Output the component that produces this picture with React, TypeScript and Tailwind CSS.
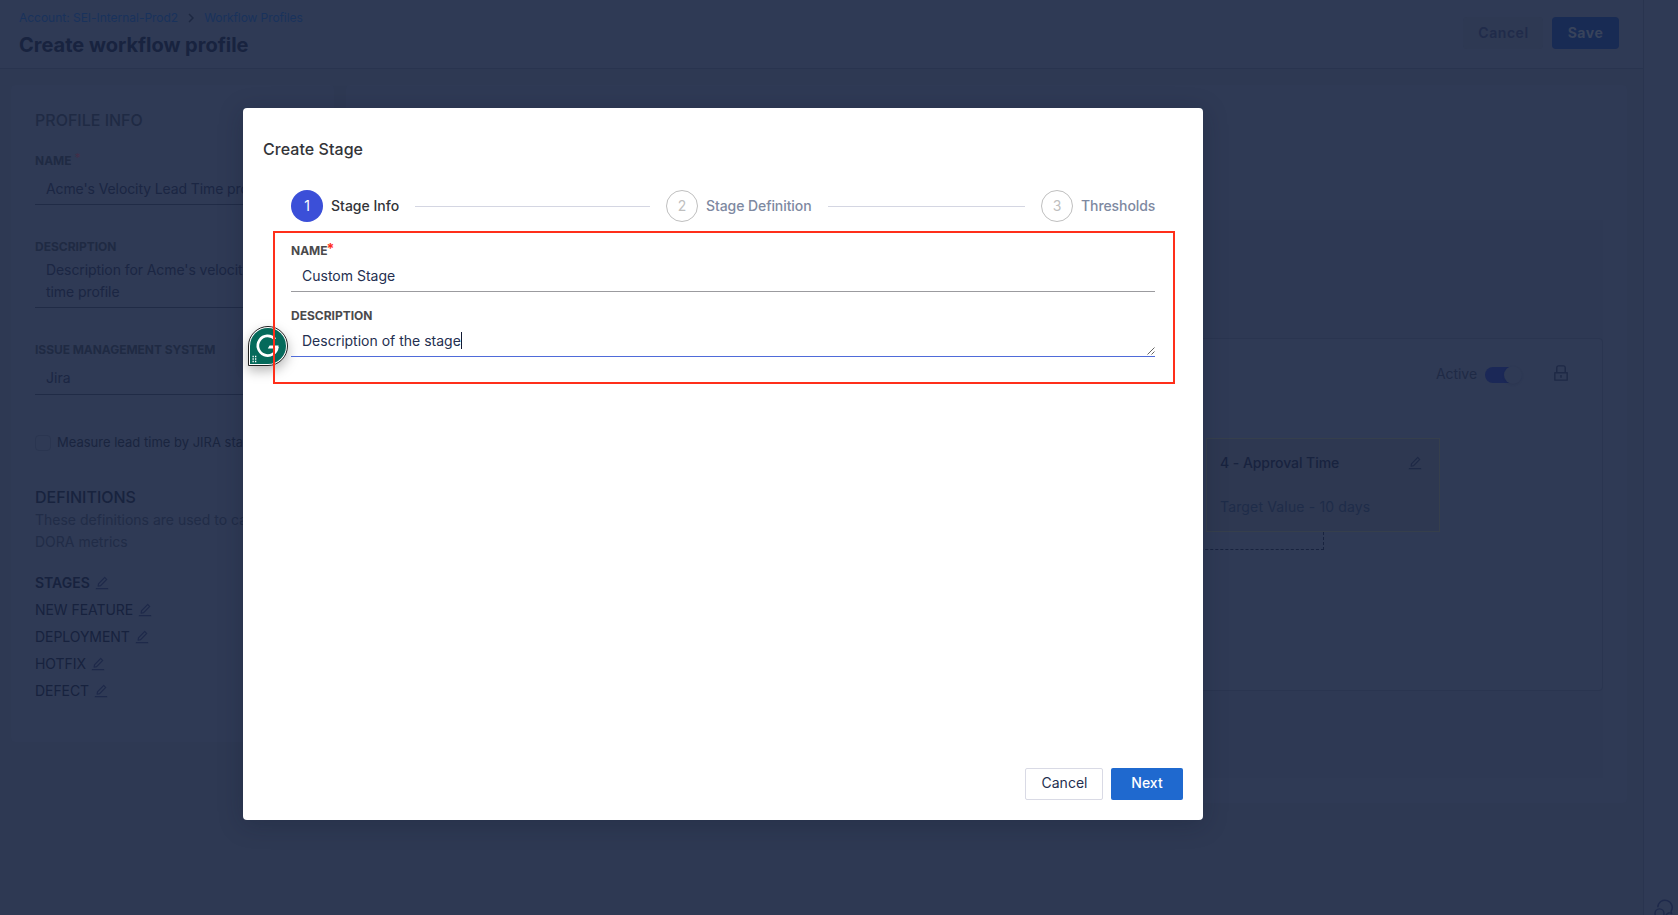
import React from "react";
import { AiOutlineEdit, AiOutlineLock } from "react-icons/ai";

const definitions = ["STAGES", "NEW FEATURE", "DEPLOYMENT", "HOTFIX", "DEFECT"];

function Header() {
  return (
    <header className="flex h-[69px] items-start justify-between border-b border-[#29344f] bg-[#2f3a55] pl-[19px] pr-6">
      <div className="pt-[9px]">
        <nav className="flex h-[18px] items-center text-xs leading-[18px] text-[#19325c]">
          <span className="tracking-[-0.02px]">Account: SEI-Internal-Prod2</span>
          <svg width="6" height="10" viewBox="0 0 6 10" className="mx-[10px] text-[#1d2842]" fill="none" stroke="currentColor" strokeWidth="1.5">
            <path d="M1 1l4 4-4 4" />
          </svg>
          <span className="tracking-[-0.09px]">Workflow Profiles</span>
        </nav>
        <h1 className="mt-[5px] text-xl leading-[26px] font-bold text-[#18233f]">Create workflow profile</h1>
      </div>
      <div className="flex gap-[9px] pt-[17px] text-sm tracking-[0.55px]">
        <button className="h-8 w-20 rounded bg-[#2e3953] pl-px font-semibold text-[#202b4a]">Cancel</button>
        <button className="h-8 w-[67px] rounded bg-[#182b54] font-bold text-[#38435b]">Save</button>
      </div>
    </header>
  );
}

function ProfilePanel() {
  return (
    <section className="h-[657px] w-[323px] rounded bg-[#2f3a55] px-6 pt-[23px]">
      <h2 className="text-base leading-6 font-medium text-[#1f2a44]">PROFILE INFO</h2>
      <div className="mt-[19px] flex text-xs leading-5 font-bold text-[#1f2a43]">
        NAME<span className="ml-[3px] -mt-[3px] font-normal text-[#432e48]">*</span>
      </div>
      <div className="mt-[7px] border-b border-[#202b46] pb-1 pl-[11px] text-sm leading-[22px] tracking-[-0.1px] text-[#1b2643]">
        Acme's Velocity Lead Time profile
      </div>
      <div className="mt-8 text-xs leading-5 font-bold text-[#1f2a43]">DESCRIPTION</div>
      <div className="mt-0.5 border-b border-[#202b46] pb-1 pl-[11px] text-sm leading-[22px] tracking-[-0.08px] text-[#1b2643]">
        Description for Acme's velocity lead
        <br />
        time profile
      </div>
      <div className="mt-8 text-xs leading-5 font-bold tracking-[-0.05px] text-[#1f2a43]">ISSUE MANAGEMENT SYSTEM</div>
      <div className="mt-[7px] border-b border-[#202b46] pb-[5px] pl-[11px] text-sm leading-[22px] text-[#1b2643]">Jira</div>
      <div className="mt-[37px] flex h-5 items-center gap-1.5 text-[13px] leading-5 whitespace-nowrap text-[#1a253f]">
        <span className="mt-[2px] h-4 w-4 shrink-0 rounded-sm border border-[#2a3550]" />
        Measure lead time by JIRA status
      </div>
      <h2 className="mt-[33px] text-base leading-6 font-medium text-[#18233e]">DEFINITIONS</h2>
      <p className="text-sm leading-[22px] text-[#212c47]">These definitions are used to calculate DORA metrics</p>
      <ul className="mt-4 text-sm text-[#17223e]">
        {definitions.map((name, i) => (
          <li key={name} className="flex h-[27px] items-center gap-1">
            <span className={i === 0 ? "font-semibold" : "tracking-[-0.06px]"}>{name}</span>
            <AiOutlineEdit size={16} className="text-[#1e294a]" />
          </li>
        ))}
      </ul>
    </section>
  );
}

function WorkflowPanel() {
  return (
    <section className="h-[718px] w-[1281px] rounded bg-[#2f3a55] px-6 pt-[135px]">
      <div className="h-[558px] bg-[#2e3954] pt-[118px]">
        <div className="flex h-[353px] flex-col items-end rounded border border-[#2a3550] bg-[#2f3a55] pt-[25px]">
          <div className="flex h-5 items-center pr-[31px] text-sm text-[#1f2a46]">
            <span className="tracking-[-0.06px]">Active</span>
            <span className="mt-[2px] ml-[8px] flex h-4 w-[34px] items-center justify-end rounded-full bg-[#1b2857]">
              <span className="-mr-[3px] h-[18px] w-[18px] shrink-0 rounded-full bg-[#2f3a55] shadow-[0_1px_2px_rgba(24,34,62,0.15)]" />
            </span>
            <AiOutlineLock size={20} className="-mt-[2px] ml-8 text-[#1e2946]" />
          </div>
          <div className="mt-[54px] mr-[162px] flex h-[94px] w-[234px] flex-col border border-[#363f4c] bg-[#2e3851] px-[13px] pt-[14px] text-sm leading-5">
            <div className="flex items-center justify-between">
              <span className="font-medium tracking-[-0.06px] text-[#18233f]">4 - Approval Time</span>
              <AiOutlineEdit size={16} className="mr-[3px] text-[#1e2946]" />
            </div>
            <span className="mt-6 tracking-[0.15px] text-[#1e2c49]">Target Value - 10 days</span>
          </div>
          <div className="mr-[278px] h-[18px] w-[300px] border-r border-b border-dashed border-[#18233f]" />
        </div>
      </div>
    </section>
  );
}

function HelpRail() {
  return (
    <aside className="flex h-full w-[35px] flex-col justify-end border-l border-[#29344f] bg-[#2f3a55] pl-[9px]">
      <svg width="22" height="16" viewBox="0 0 22 16" fill="none" stroke="#1e294b" strokeWidth="1.4">
        <path d="M4.8 8.2a7.2 7.2 0 1 1 13.2 4.2l.6 2.6" />
        <circle cx="6.5" cy="14.4" r="4.5" />
        <path d="M13 16.4a3.8 3.8 0 0 1 6-1.6" />
      </svg>
    </aside>
  );
}

function Step({ n, title, active, last }: { n: number; title: string; active?: boolean; last?: boolean }) {
  return (
    <li className={last ? "flex items-center" : "mr-4 flex w-[359px] items-center"}>
      <span
        className={
          active
            ? "flex h-8 w-8 shrink-0 items-center justify-center rounded-full bg-[#3b4fd8] text-sm text-white"
            : "flex h-8 w-8 shrink-0 items-center justify-center rounded-full border border-[#bfbfbf] text-sm text-[#bfbfbf]"
        }
      >
        {n}
      </span>
      <span
        className={
          active
            ? "ml-2 text-sm font-medium whitespace-nowrap text-[#333438]"
            : "ml-2 text-sm font-medium tracking-[-0.08px] whitespace-nowrap text-[#7e89a1]"
        }
      >
        {title}
      </span>
      {!last && <span className="ml-4 h-px flex-1 bg-[#d4d6e2]" />}
    </li>
  );
}

function GrammarBadge() {
  return (
    <svg className="absolute top-[218px] left-[5px] drop-shadow-[0_5px_6px_rgba(0,0,0,0.28)]" width="40" height="40" viewBox="0 0 40 40" fill="none">
      <path d="M.5 39.5V20A19.5 19.5 0 1 1 20 39.5z" fill="#fff" stroke="#222" />
      <path d="M2 38V20a18 18 0 1 1 18 18z" fill="#056a5b" />
      <path d="M27 13.2A9.8 9.8 0 1 0 29.4 20.8" stroke="#fff" strokeWidth="2.7" />
      <path d="M21.6 19.4h9l-.4 2.6-3.4 4.6.4-4.2h-7.4z" fill="#fff" />
      <path d="M4.5 30.5h1.3M7 30.5h1.3M4.5 33h1.3M7 33h1.3M4.5 35.5h1.3M7 35.5h1.3" stroke="#fff" strokeWidth="1.3" />
    </svg>
  );
}

function StageDialog() {
  return (
    <div className="absolute inset-0 flex items-start pt-[108px] pl-[243px]">
      <div role="dialog" className="relative flex h-[712px] w-[960px] flex-col rounded bg-white shadow-[0_4px_24px_rgba(16,22,44,0.25)]">
        <h2 className="mt-[29px] ml-5 text-base leading-6 font-medium tracking-[0.05px] text-[#333438]">Create Stage</h2>
        <ol className="mt-[29px] ml-12 flex">
          <Step n={1} title="Stage Info" active />
          <Step n={2} title="Stage Definition" />
          <Step n={3} title="Thresholds" last />
        </ol>
        <GrammarBadge />
        <div className="relative mt-[9px] ml-[30px] h-[153px] w-[902px] border-2 border-[#ff2f1a] pt-2 pr-[18px] pl-4">
          <div className="flex text-xs leading-5 font-bold text-[#4a4a4c]">
            NAME<span className="-mt-[2px] -ml-px text-sm leading-5 text-[#ff2f1a]">*</span>
          </div>
          <div className="mt-1 border-b border-[#9b9b9f] pb-1 pl-[11px] text-sm leading-[22px] text-[#242f50]">Custom Stage</div>
          <div className="mt-[14px] text-xs leading-5 font-bold text-[#4a4a4c]">DESCRIPTION</div>
          <div className="mt-1 flex items-end border-b border-[#4f6bd9] pb-1 pl-[11px] text-sm leading-[22px] text-[#242f50]">
            <span>Description of the stage</span>
            <span className="mb-[3px] h-[17px] w-px bg-[#111a33]" />
            <svg className="-mb-[3px] ml-auto" width="8" height="8" viewBox="0 0 8 8" stroke="#555" strokeWidth="0.9">
              <path d="M.5 7.5l7-7M4.5 7.5l3-3" />
            </svg>
          </div>
        </div>
        <div className="mt-auto mr-5 mb-5 flex justify-end gap-2 text-sm">
          <button className="h-8 w-[78px] rounded-xs border border-[#d9dae5] pb-[3px] pl-px text-[#242f50]">Cancel</button>
          <button className="h-8 w-[72px] rounded-xs bg-[#1f69cf] pb-[3px] font-medium text-white">Next</button>
        </div>
      </div>
    </div>
  );
}

export default function App() {
  return (
    <div className="relative flex h-[915px] w-[1678px] overflow-hidden bg-[#2e3953] font-[Inter,sans-serif]">
      <div className="flex w-[1643px] flex-col">
        <Header />
        <main className="flex items-start gap-3 pt-4 pl-[11px]">
          <ProfilePanel />
          <WorkflowPanel />
        </main>
      </div>
      <HelpRail />
      <StageDialog />
    </div>
  );
}
